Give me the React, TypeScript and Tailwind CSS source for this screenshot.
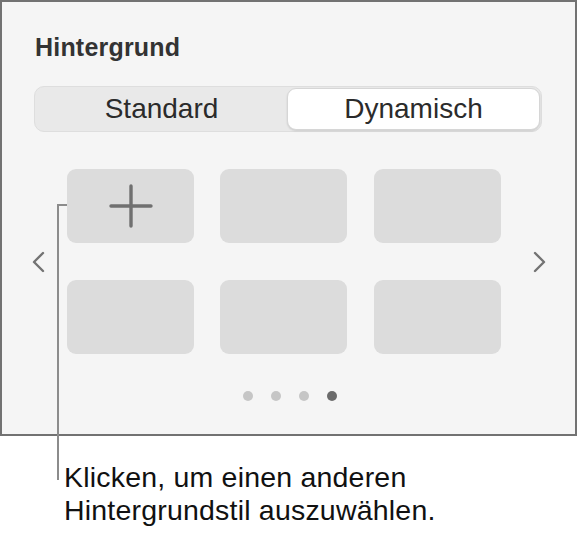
import React from "react";

function Chevron({ dir }: { dir: "left" | "right" }) {
  const points = dir === "left" ? "11,2 2,11 11,20" : "2,2 11,11 2,20";
  return (
    <svg width="13" height="22" viewBox="0 0 13 22" fill="none">
      <polyline
        points={points}
        stroke="#737373"
        strokeWidth="2.4"
        strokeLinecap="round"
        strokeLinejoin="round"
      />
    </svg>
  );
}

function Tile({ plus }: { plus?: boolean }) {
  return (
    <div className="flex h-[74px] w-[127px] items-center justify-center rounded-[9px] bg-[#dcdcdc]">
      {plus && (
        <svg width="44" height="44" viewBox="0 0 44 44" fill="none">
          <path
            d="M22 2 V42 M2 22 H42"
            stroke="#707070"
            strokeWidth="3.4"
            strokeLinecap="round"
          />
        </svg>
      )}
    </div>
  );
}

export default function App() {
  const dots = [false, false, false, true];

  return (
    <div className="relative w-[577px] bg-white font-['Liberation_Sans',Arial,sans-serif]">
      <section className="flex flex-col border-2 border-[#727272] bg-[#f5f5f5] pb-[33px] pt-[33px]">
        <h2 className="pl-[33px] text-[25px] font-bold leading-[25px] tracking-[0.2px] text-[#333]">
          Hintergrund
        </h2>

        <div className="ml-[32px] mt-[26px] flex h-[46px] w-[508px] items-center rounded-[10px] border border-[#dedede] bg-[#e9e9e9] p-[1px]">
          <div className="flex h-full flex-1 items-center justify-center text-[28px] text-[#2b2b2b]">
            Standard
          </div>
          <div className="flex h-full flex-1 items-center justify-center rounded-[9px] border border-[#d6d6d6] bg-white text-[28px] text-[#2b2b2b] shadow-[0_1px_2px_rgba(0,0,0,0.12)]">
            Dynamisch
          </div>
        </div>

        <div className="mt-[37px] flex items-center">
          <div className="ml-[30px] flex w-[13px]">
            <Chevron dir="left" />
          </div>
          <div className="ml-[22px] grid w-[434px] grid-cols-3 gap-x-[26px] gap-y-[37px]">
            <Tile plus />
            <Tile />
            <Tile />
            <Tile />
            <Tile />
            <Tile />
          </div>
          <div className="ml-[32px] flex w-[13px]">
            <Chevron dir="right" />
          </div>
        </div>

        <div className="mt-[37px] flex items-center justify-center gap-[18px] pl-[3px]">
          {dots.map((active, i) => (
            <span
              key={i}
              className={
                active
                  ? "h-[10px] w-[10px] rounded-full bg-[#6b6b6b]"
                  : "h-[10px] w-[10px] rounded-full bg-[#c6c6c6]"
              }
            />
          ))}
        </div>
      </section>

      <p className="mt-[25px] pl-[64px] text-[28.5px] leading-[33px] tracking-[0.2px] text-[#111]">
        Klicken, um einen anderen
        <br />
        Hintergrundstil auszuwählen.
      </p>

      {/* callout leader */}
      <div className="absolute left-[57px] top-[204px] h-[276px] w-[2px] bg-[#8c8c8c]" />
      <div className="absolute left-[57px] top-[204px] h-[2px] w-[10px] bg-[#8c8c8c]" />
    </div>
  );
}
